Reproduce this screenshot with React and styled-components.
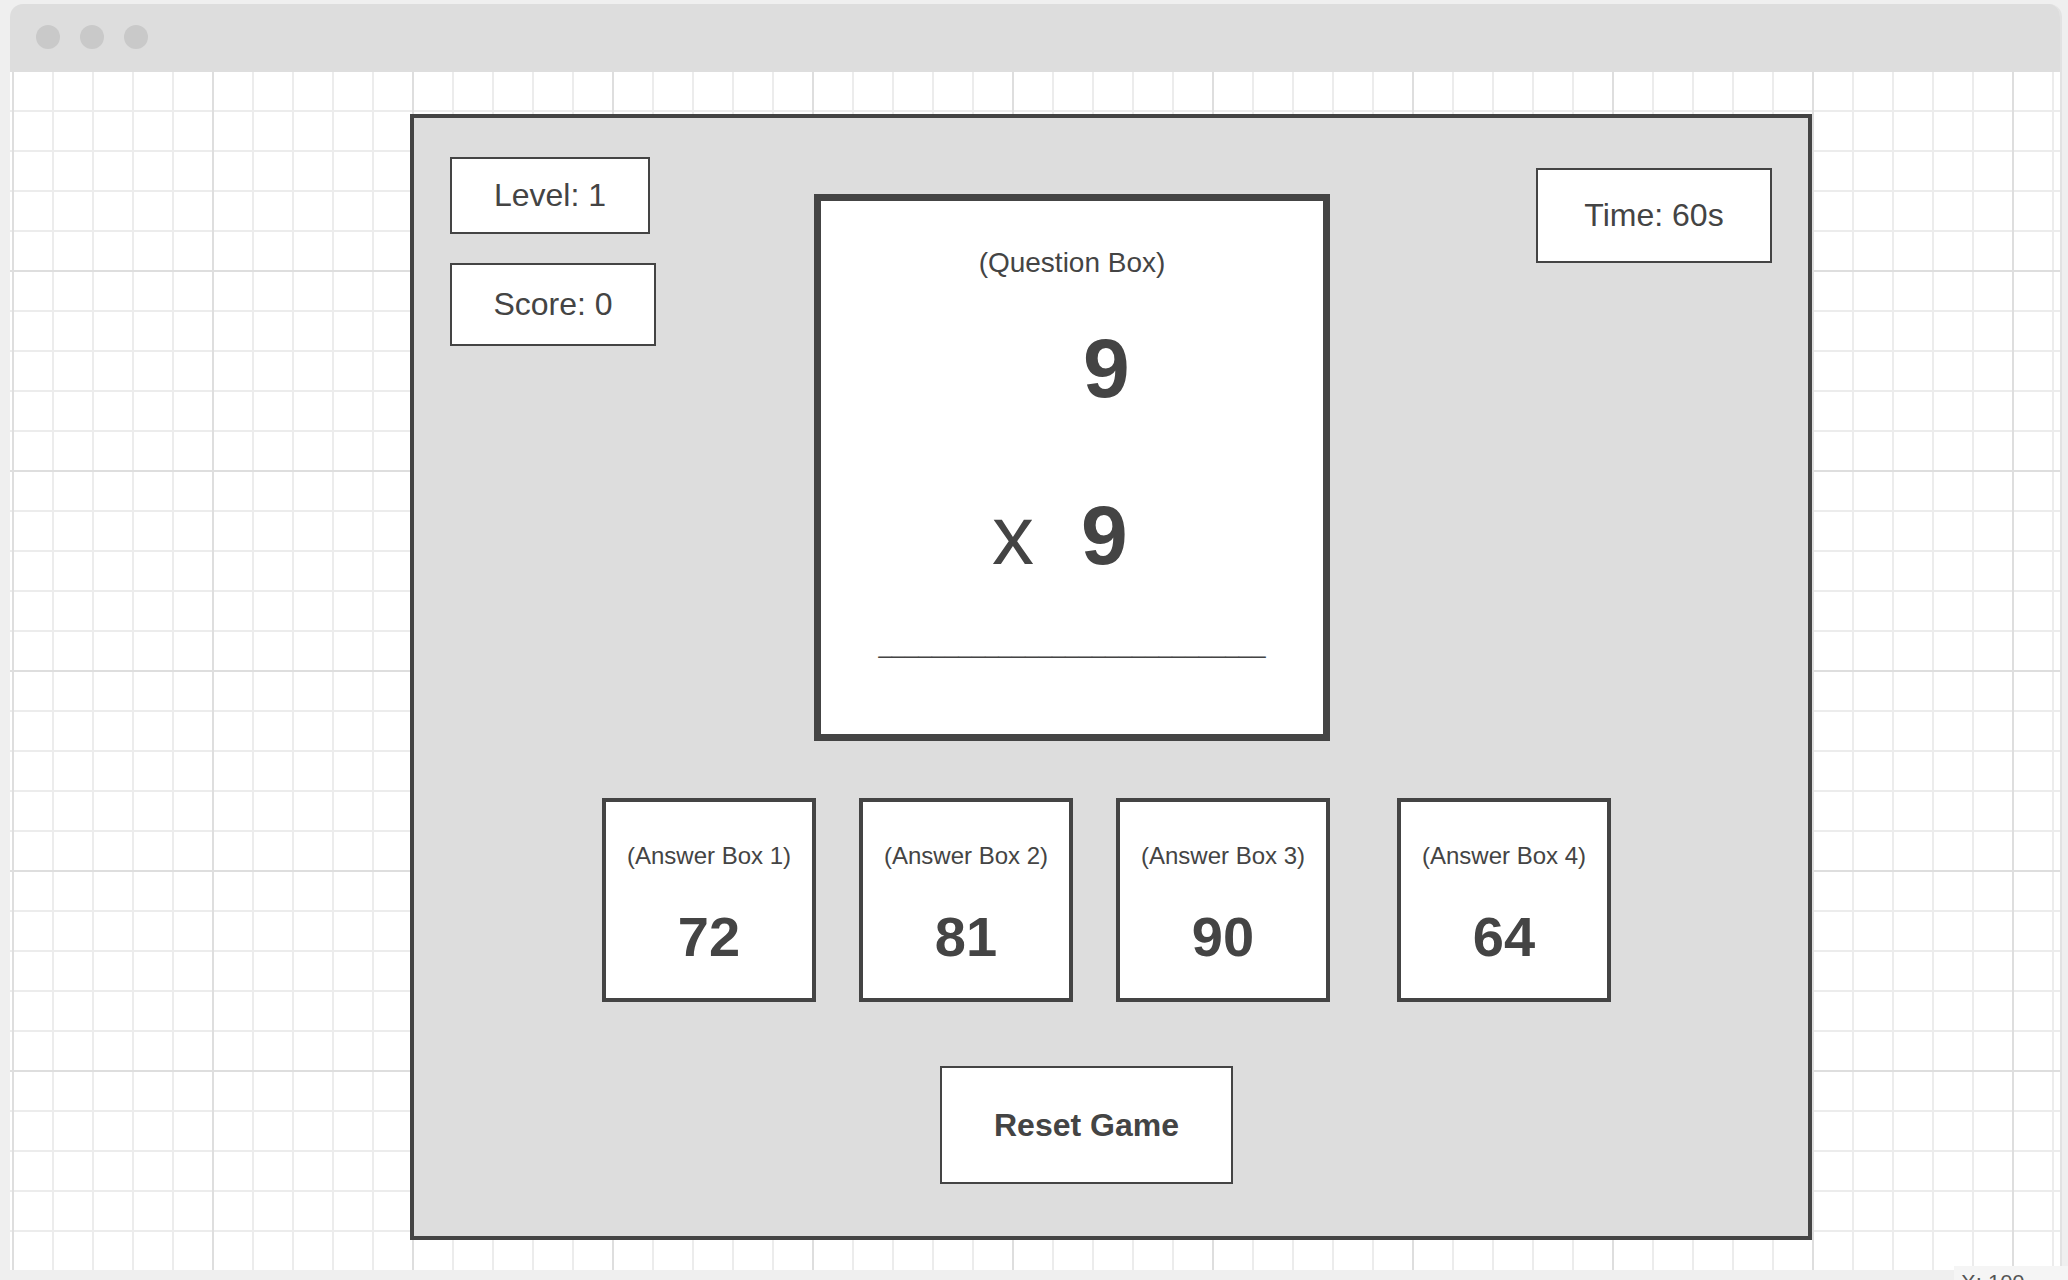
import React from 'react';
import styled, { createGlobalStyle } from 'styled-components';

const GlobalStyle = createGlobalStyle`
    html, body {
        margin: 0;
        padding: 0;
    }
    body {
        background: #efefef;
        font-family: 'Liberation Sans', Arial, sans-serif;
        color: #444444;
        overflow: hidden;
    }
`;

const answers = [
    { label: '(Answer Box 1)', value: 72 },
    { label: '(Answer Box 2)', value: 81 },
    { label: '(Answer Box 3)', value: 90 },
    { label: '(Answer Box 4)', value: 64, spaced: true },
];

const App = () => (
    <>
        <GlobalStyle />
        <Page>
            <BrowserWindow>
                <TitleBar>
                    <Dot />
                    <Dot />
                    <Dot />
                </TitleBar>
                <Canvas>
                    <GamePanel>
                        <TopRow>
                            <StatsColumn>
                                <StatBox $w={200} $h={77}>Level: 1</StatBox>
                                <StatBox $w={206} $h={83}>Score: 0</StatBox>
                            </StatsColumn>

                            <QuestionCard>
                                <QuestionLabel>(Question Box)</QuestionLabel>
                                <Problem>
                                    <OperandRow>
                                        <Sign />
                                        <Digit $nudge={2}>9</Digit>
                                    </OperandRow>
                                    <OperandRow>
                                        <Sign>x</Sign>
                                        <Digit>9</Digit>
                                    </OperandRow>
                                </Problem>
                                <AnswerLine>{'_'.repeat(29)}</AnswerLine>
                            </QuestionCard>

                            <TimerBox $w={236} $h={95}>Time: 60s</TimerBox>
                        </TopRow>

                        <AnswerRow>
                            {answers.map((a) => (
                                <AnswerCard key={a.label} $spaced={a.spaced}>
                                    <AnswerLabel>{a.label}</AnswerLabel>
                                    <AnswerValue>{a.value}</AnswerValue>
                                </AnswerCard>
                            ))}
                        </AnswerRow>

                        <ResetRow>
                            <ResetButton type="button">Reset Game</ResetButton>
                        </ResetRow>
                    </GamePanel>
                </Canvas>
            </BrowserWindow>
            <CoordBadge>X: 100</CoordBadge>
        </Page>
    </>
);

export default App;

// --- WINDOW CHROME ---

const Page = styled.div`
    position: relative;
    width: 2068px;
    height: 1280px;
    padding: 4px 6px 0 10px;
    box-sizing: border-box;
    overflow: hidden;
`;

const BrowserWindow = styled.div`
    height: 1266px;
    display: flex;
    flex-direction: column;
    border-right: 2px solid #e2e2e2;
    border-radius: 13px 13px 0 0;
    overflow: hidden;
`;

const TitleBar = styled.div`
    height: 66px;
    flex-shrink: 0;
    background: #dddddd;
    display: flex;
    align-items: center;
    gap: 20px;
    padding-left: 26px;
`;

const Dot = styled.span`
    width: 24px;
    height: 24px;
    border-radius: 50%;
    background: #c9c9c9;
`;

const Canvas = styled.div`
    flex: 1;
    padding: 44px 0 0 400px;
    background-color: #ffffff;
    background-image:
        linear-gradient(to right, #dedede 2px, transparent 2px),
        linear-gradient(to bottom, #dedede 2px, transparent 2px),
        linear-gradient(to right, #ececec 2px, transparent 2px),
        linear-gradient(to bottom, #ececec 2px, transparent 2px);
    background-size: 200px 200px, 200px 200px, 40px 40px, 40px 40px;
    background-position: 2px 0;
`;

/* partially visible cursor readout under the window, as in the capture */
const CoordBadge = styled.div`
    position: absolute;
    left: 1954px;
    top: 1266px;
    right: 0;
    bottom: 0;
    background: #f5f5f5;
    padding: 4px 0 0 7px;
    font-size: 22px;
    line-height: 26px;
    color: #555555;
`;

// --- GAME PANEL ---

const GamePanel = styled.div`
    width: 1402px;
    height: 1126px;
    box-sizing: border-box;
    border: 4px solid #444444;
    background: #dddddd;
    padding: 38px 36px 0;
    display: flex;
    flex-direction: column;
`;

const TopRow = styled.div`
    display: flex;
    align-items: flex-start;
`;

const StatsColumn = styled.div`
    width: 364px;
    margin-top: 1px;
    display: flex;
    flex-direction: column;
    align-items: flex-start;
    gap: 29px;
`;

const StatBox = styled.div`
    width: ${(p) => p.$w}px;
    height: ${(p) => p.$h}px;
    box-sizing: border-box;
    border: 2px solid #444444;
    background: #ffffff;
    display: flex;
    align-items: center;
    justify-content: center;
    font-size: 32px;
`;

const TimerBox = styled(StatBox)`
    margin-left: auto;
    margin-top: 12px;
`;

const QuestionCard = styled.div`
    margin-top: 38px;
    width: 516px;
    height: 547px;
    box-sizing: border-box;
    border: 7px solid #444444;
    background: #ffffff;
    padding-top: 46px;
    display: flex;
    flex-direction: column;
`;

const QuestionLabel = styled.div`
    font-size: 28px;
    line-height: 32px;
    text-align: center;
`;

const Problem = styled.div`
    margin-top: 47px;
    padding-left: 171px;
    display: flex;
    flex-direction: column;
    gap: 83px;
`;

const OperandRow = styled.div`
    display: flex;
    height: 84px;
    font-size: 84px;
    line-height: 84px;
`;

const Sign = styled.span`
    width: 89px;
    font-weight: 400;
`;

const Digit = styled.span`
    font-weight: 700;
    margin-left: ${(p) => p.$nudge || 0}px;
`;

const AnswerLine = styled.div`
    margin-top: 54px;
    font-size: 24px;
    line-height: 28px;
    text-align: center;
    white-space: nowrap;
`;

// --- ANSWERS ---

const AnswerRow = styled.div`
    margin-top: 57px;
    padding-left: 152px;
    display: flex;
    gap: 43px;
`;

const AnswerCard = styled.div`
    width: 214px;
    height: 204px;
    box-sizing: border-box;
    border: 4px solid #444444;
    background: #ffffff;
    padding-top: 40px;
    margin-left: ${(p) => (p.$spaced ? 24 : 0)}px;
    display: flex;
    flex-direction: column;
    align-items: center;
`;

const AnswerLabel = styled.div`
    font-size: 24px;
    line-height: 28px;
    white-space: nowrap;
`;

const AnswerValue = styled.div`
    margin-top: 39px;
    font-size: 56px;
    line-height: 56px;
    font-weight: 700;
`;

// --- RESET ---

const ResetRow = styled.div`
    margin-top: 64px;
    padding-left: 490px;
    display: flex;
`;

const ResetButton = styled.button`
    width: 293px;
    height: 118px;
    box-sizing: border-box;
    padding: 0;
    border: 2px solid #444444;
    border-radius: 0;
    background: #ffffff;
    color: #444444;
    font-family: 'Liberation Sans', Arial, sans-serif;
    font-size: 32px;
    font-weight: 700;
    cursor: pointer;
`;
